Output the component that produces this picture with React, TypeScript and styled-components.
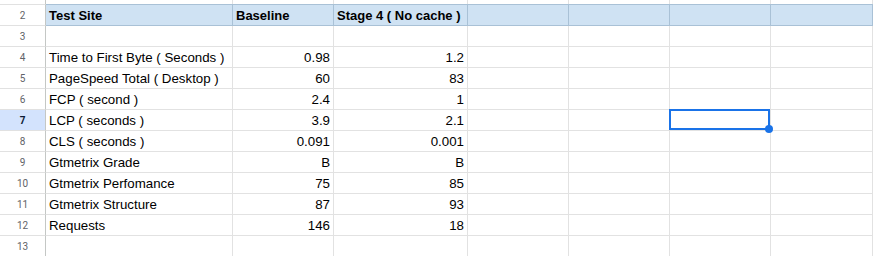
import React from 'react'
import styled, { createGlobalStyle } from 'styled-components'

const COLS = [187, 101, 134, 101, 101, 101, 102]

interface RowI {
  label: string
  baseline: string
  stage4: string
}

const rows: (RowI | null)[] = [
  null,
  { label: 'Time to First Byte ( Seconds )', baseline: '0.98', stage4: '1.2' },
  { label: 'PageSpeed Total ( Desktop )', baseline: '60', stage4: '83' },
  { label: 'FCP ( second )', baseline: '2.4', stage4: '1' },
  { label: 'LCP ( seconds )', baseline: '3.9', stage4: '2.1' },
  { label: 'CLS ( seconds )', baseline: '0.091', stage4: '0.001' },
  { label: 'Gtmetrix Grade', baseline: 'B', stage4: 'B' },
  { label: 'Gtmetrix Perfomance', baseline: '75', stage4: '85' },
  { label: 'Gtmetrix Structure', baseline: '87', stage4: '93' },
  { label: 'Requests', baseline: '146', stage4: '18' },
  null,
]

const SELECTED_ROW = 7
const SELECTED_COL = 5

const App: React.FC = () => {
  return (
    <>
      <GlobalStyle />
      <Sheet>
        <RowHeader $height={5} />
        {COLS.map((_, i) => (
          <Cell key={`r1-${i}`} $height={5} />
        ))}

        <RowHeader $height={21}>2</RowHeader>
        <HeaderCell>Test Site</HeaderCell>
        <HeaderCell>Baseline</HeaderCell>
        <HeaderCell>Stage 4 ( No cache )</HeaderCell>
        {COLS.slice(3).map((_, i) => (
          <HeaderCell key={`h-${i}`} />
        ))}

        {rows.map((row, idx) => {
          const num = idx + 3
          const active = num === SELECTED_ROW
          return (
            <React.Fragment key={num}>
              <RowHeader $height={21} $active={active}>
                {num}
              </RowHeader>
              <Cell>{row?.label}</Cell>
              <Cell $align='right'>{row?.baseline}</Cell>
              <Cell $align='right'>{row?.stage4}</Cell>
              {COLS.slice(3).map((_, i) => (
                <Cell key={i}>
                  {active && i + 3 === SELECTED_COL && (
                    <Selection>
                      <Handle />
                    </Selection>
                  )}
                </Cell>
              ))}
            </React.Fragment>
          )
        })}
      </Sheet>
    </>
  )
}

const GlobalStyle = createGlobalStyle`
  html, body {
    margin: 0;
    padding: 0;
    background: #ffffff;
    overflow: hidden;
  }
  body {
    font-family: 'Liberation Sans', Arial, sans-serif;
  }
`

const Sheet = styled.div`
  display: grid;
  grid-template-columns: 46px ${COLS.map((c) => `${c}px`).join(' ')} 1fr;
  width: 880px;
  background: #ffffff;
`

const RowHeader = styled.div<{ $height: number; $active?: boolean }>`
  height: ${(p) => p.$height}px;
  box-sizing: border-box;
  grid-column: 1;
  display: flex;
  align-items: center;
  justify-content: center;
  border-right: 1px solid #c4c7c5;
  border-bottom: 1px solid #e1e1e1;
  background: ${(p) => (p.$active ? '#d3e3fd' : '#ffffff')};
  color: ${(p) => (p.$active ? '#0b1a33' : '#5f6368')};
  font-family: 'Roboto', 'Liberation Sans', sans-serif;
  font-size: 10px;
  font-weight: ${(p) => (p.$active ? 700 : 400)};
`

const Cell = styled.div<{ $height?: number; $align?: 'left' | 'right' }>`
  position: relative;
  height: ${(p) => p.$height ?? 21}px;
  box-sizing: border-box;
  display: flex;
  align-items: flex-end;
  justify-content: ${(p) => (p.$align === 'right' ? 'flex-end' : 'flex-start')};
  padding: 0 3px 2px 3px;
  border-right: 1px solid #e2e2e2;
  border-bottom: 1px solid #e2e2e2;
  color: #000000;
  font-size: 13.3px;
  line-height: 15px;
  white-space: nowrap;
`

const HeaderCell = styled(Cell)`
  background: #cfe2f3;
  border-right-color: #a9c1d6;
  border-bottom-color: #a9c1d6;
  font-weight: 700;
  font-size: 13px;
  margin-top: -1px;
  height: 22px;
  border-top: 1px solid #a9c1d6;
`

const Selection = styled.div`
  position: absolute;
  top: -1px;
  left: -1px;
  right: 0;
  bottom: 0;
  border: 2px solid #1a73e8;
  z-index: 2;
`

const Handle = styled.div`
  position: absolute;
  right: -5px;
  bottom: -5px;
  width: 8px;
  height: 8px;
  border-radius: 50%;
  background: #1a73e8;
`

export default App
